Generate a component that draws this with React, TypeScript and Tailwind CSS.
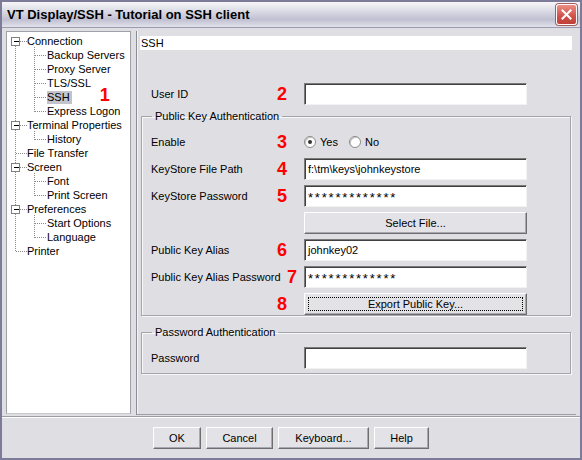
import React from 'react';

const treeRows: { label: string; level: number; box?: boolean; selected?: boolean }[] = [
    { label: 'Connection', level: 0, box: true },
    { label: 'Backup Servers', level: 1 },
    { label: 'Proxy Server', level: 1 },
    { label: 'TLS/SSL', level: 1 },
    { label: 'SSH', level: 1, selected: true },
    { label: 'Express Logon', level: 1 },
    { label: 'Terminal Properties', level: 0, box: true },
    { label: 'History', level: 1 },
    { label: 'File Transfer', level: 0 },
    { label: 'Screen', level: 0, box: true },
    { label: 'Font', level: 1 },
    { label: 'Print Screen', level: 1 },
    { label: 'Preferences', level: 0, box: true },
    { label: 'Start Options', level: 1 },
    { label: 'Language', level: 1 },
    { label: 'Printer', level: 0 },
];

// row centre in page pixels
const cy = (i: number) => 41 + 14 * i;

const TreeLines = () => {
    const dot = { stroke: '#8a8a8a', strokeWidth: 1, strokeDasharray: '1 1', shapeRendering: 'crispEdges' as const };
    const children: [number, number][] = [[0, 5], [6, 7], [9, 11], [12, 14]];
    return (
        <svg className="absolute left-0 top-0 pointer-events-none" width="124" height="382">
            <g transform="translate(-6.5,-31.5)">
                <line x1={15} y1={cy(0)} x2={15} y2={cy(15)} {...dot} />
                {treeRows.map((r, i) =>
                    r.level === 0 ? <line key={'h' + i} x1={15} y1={cy(i)} x2={26} y2={cy(i)} {...dot} /> : null
                )}
                {children.map(([p, last]) => (
                    <g key={p}>
                        <line x1={34} y1={cy(p) + 5} x2={34} y2={cy(last)} {...dot} />
                        {treeRows.slice(p + 1, last + 1).map((_, k) => (
                            <line key={k} x1={34} y1={cy(p + 1 + k)} x2={46} y2={cy(p + 1 + k)} {...dot} />
                        ))}
                    </g>
                ))}
                {treeRows.map((r, i) =>
                    r.box ? (
                        <g key={'b' + i}>
                            <rect x={11} y={cy(i) - 4} width={8} height={8} fill="#fff" stroke="#808080" shapeRendering="crispEdges" />
                            <line x1={13} y1={cy(i)} x2={18} y2={cy(i)} stroke="#000" shapeRendering="crispEdges" />
                        </g>
                    ) : null
                )}
            </g>
        </svg>
    );
};

const Num = ({ n, className = '' }: { n: string; className?: string }) => (
    <span className={`text-[18px] leading-[14px] font-bold text-[#ff0000] ${className}`}>{n}</span>
);

const Field = ({ value = '', secret = false }: { value?: string; secret?: boolean }) => (
    <div className="w-[223px] h-[22px] bg-white border border-t-[#7a7a7a] border-l-[#7a7a7a] border-r-[#f2f2f2] border-b-[#f2f2f2] shadow-[inset_1px_1px_0_#404040] flex items-center pl-[3px] text-[11px] text-black overflow-hidden">
        {secret ? <span className="text-[13px] tracking-[1.8px] leading-none pt-[3px]">{value}</span> : value}
    </div>
);

const Button = ({ label, w, focus = false }: { label: string; w: string; focus?: boolean }) => (
    <div className={`${w} h-[22px] bg-[#e3e2e7] border border-t-white border-l-white border-r-[#6e6e6e] border-b-[#6e6e6e] shadow-[inset_-1px_-1px_0_#a8a8b0] flex items-center justify-center text-[11px] text-black`}>
        {focus ? (
            <div className="w-[calc(100%-6px)] h-[calc(100%-6px)] border border-dotted border-black flex items-center justify-center">{label}</div>
        ) : (
            label
        )}
    </div>
);

const Row = ({ label, num, numClass = '', children }: { label: string; num?: string; numClass?: string; children: React.ReactNode }) => (
    <div className="flex items-center h-[22px]">
        <div className="w-[135px] pl-[9px] shrink-0 whitespace-nowrap text-[11px] text-black">{label}</div>
        <div className="w-[27px] shrink-0 flex">{num && <Num n={num} className={numClass} />}</div>
        {children}
    </div>
);

const Radio = ({ checked }: { checked?: boolean }) => (
    <span className="w-[12px] h-[12px] rounded-full bg-white border border-[#8a8a8a] shadow-[inset_1px_1px_0_#c8c8c8] flex items-center justify-center">
        {checked && <span className="w-[4px] h-[4px] rounded-full bg-[#333]" />}
    </span>
);

export default function App() {
    return (
        <div className="w-[582px] h-[460px] flex flex-col border-2 border-[#7c7c98] bg-[#dfdfe3] font-['Liberation_Sans',Arial,sans-serif] overflow-hidden">
            {/* title bar */}
            <div className="h-[26px] shrink-0 flex items-center justify-between pl-[5px] pr-[3px] bg-[linear-gradient(to_bottom,#f6f6f9_0%,#dcdce6_35%,#c0c0d2_70%,#e2e2ea_100%)] border-b border-[#9a9ab0]">
                <span className="text-[13px] font-bold text-black">VT Display/SSH - Tutorial on SSH client</span>
                <div className="w-[21px] h-[21px] rounded-[3px] bg-[linear-gradient(to_bottom,#ec8e84,#d0504a_60%,#c0403a)] border border-[#fff8f8] shadow-[0_0_0_1px_#a06060] flex items-center justify-center">
                    <svg width="11" height="11" viewBox="0 0 11 11">
                        <path d="M1.5 1.5 L9.5 9.5 M9.5 1.5 L1.5 9.5" stroke="#fff" strokeWidth="2" strokeLinecap="square" />
                    </svg>
                </div>
            </div>

            {/* body */}
            <div className="flex pt-[3px] px-[4px] h-[387px] shrink-0">
                {/* tree */}
                <div className="relative w-[125px] h-[383px] bg-white border border-t-[#a0a0a8] border-l-[#a0a0a8] border-b-[#c8c8cc] border-r-[#a0a0a8] pt-[2px]">
                    <TreeLines />
                    {treeRows.map((r, i) => (
                        <div key={i} className={`relative h-[14px] flex items-center text-[11px] text-black ${r.level === 0 ? 'pl-[20px]' : 'pl-[40px]'}`}>
                            <span className={`whitespace-nowrap leading-[13px] ${r.selected ? 'bg-[#c3c3cb] pr-[2px]' : ''}`}>{r.label}</span>
                            {r.selected && <Num n="1" className="ml-[28px] relative -top-[2px]" />}
                        </div>
                    ))}
                </div>

                {/* splitter */}
                <div className="w-[6px] shrink-0 border-r border-[#8c8c94]" />

                {/* right panel */}
                <div className="flex-1 h-[384px] flex flex-col pl-[3px] pr-[4px] pt-[5px] border-b border-[#9c9ca4] shadow-[inset_1px_0_0_#f4f4f6]">
                    <div className="h-[14px] bg-white flex items-center pl-[1px] text-[11px] text-black">SSH</div>

                    <div className="mt-[33px] pl-[2px]">
                        <Row label="User ID" num="2">
                            <Field />
                        </Row>
                    </div>

                    <fieldset className="mt-[5px] mx-[1px] border border-[#a4a4ac] shadow-[inset_1px_1px_0_#f8f8fa,1px_1px_0_#f8f8fa]">
                        <legend className="ml-[10px] px-[3px] text-[11px] text-black leading-[13px]">Public Key Authentication</legend>
                        <div className="flex flex-col gap-[5px]">
                            <div className="flex items-center h-[18px] mt-[10px] mb-[2px]">
                                <div className="w-[135px] pl-[9px] shrink-0 text-[11px] text-black">Enable</div>
                                <div className="w-[27px] shrink-0 flex"><Num n="3" /></div>
                                <Radio checked />
                                <span className="ml-[4px] text-[11px] text-black">Yes</span>
                                <span className="ml-[11px]"><Radio /></span>
                                <span className="ml-[4px] text-[11px] text-black">No</span>
                            </div>
                            <Row label="KeyStore File Path" num="4"><Field value="f:\tm\keys\johnkeystore" /></Row>
                            <Row label="KeyStore Password" num="5"><Field value="*************" secret /></Row>
                            <Row label=""><Button label="Select File..." w="w-[223px]" /></Row>
                            <Row label="Public Key Alias" num="6"><Field value="johnkey02" /></Row>
                            <Row label="Public Key Alias Password" num="7" numClass="ml-[10px]"><Field value="*************" secret /></Row>
                            <Row label="" num="8"><Button label="Export Public Key..." w="w-[223px]" focus /></Row>
                        </div>
                    </fieldset>

                    <fieldset className="mt-[10px] mx-[1px] border border-[#a4a4ac] shadow-[inset_1px_1px_0_#f8f8fa,1px_1px_0_#f8f8fa] pb-[4px]">
                        <legend className="ml-[10px] px-[3px] text-[11px] text-black leading-[13px]">Password Authentication</legend>
                        <div className="mt-[8px]">
                            <Row label="Password"><Field /></Row>
                        </div>
                    </fieldset>
                </div>
            </div>

            {/* separator + buttons */}
            <div className="h-[2px] shrink-0 border-t border-[#9c9ca4] border-b border-b-white mt-[1px]" />
            <div className="flex-1 flex items-start pt-[9px] pl-[151px] gap-[5px]">
                <Button label="OK" w="w-[48px]" />
                <Button label="Cancel" w="w-[67px]" />
                <Button label="Keyboard..." w="w-[91px]" />
                <Button label="Help" w="w-[55px]" />
            </div>
        </div>
    );
}
